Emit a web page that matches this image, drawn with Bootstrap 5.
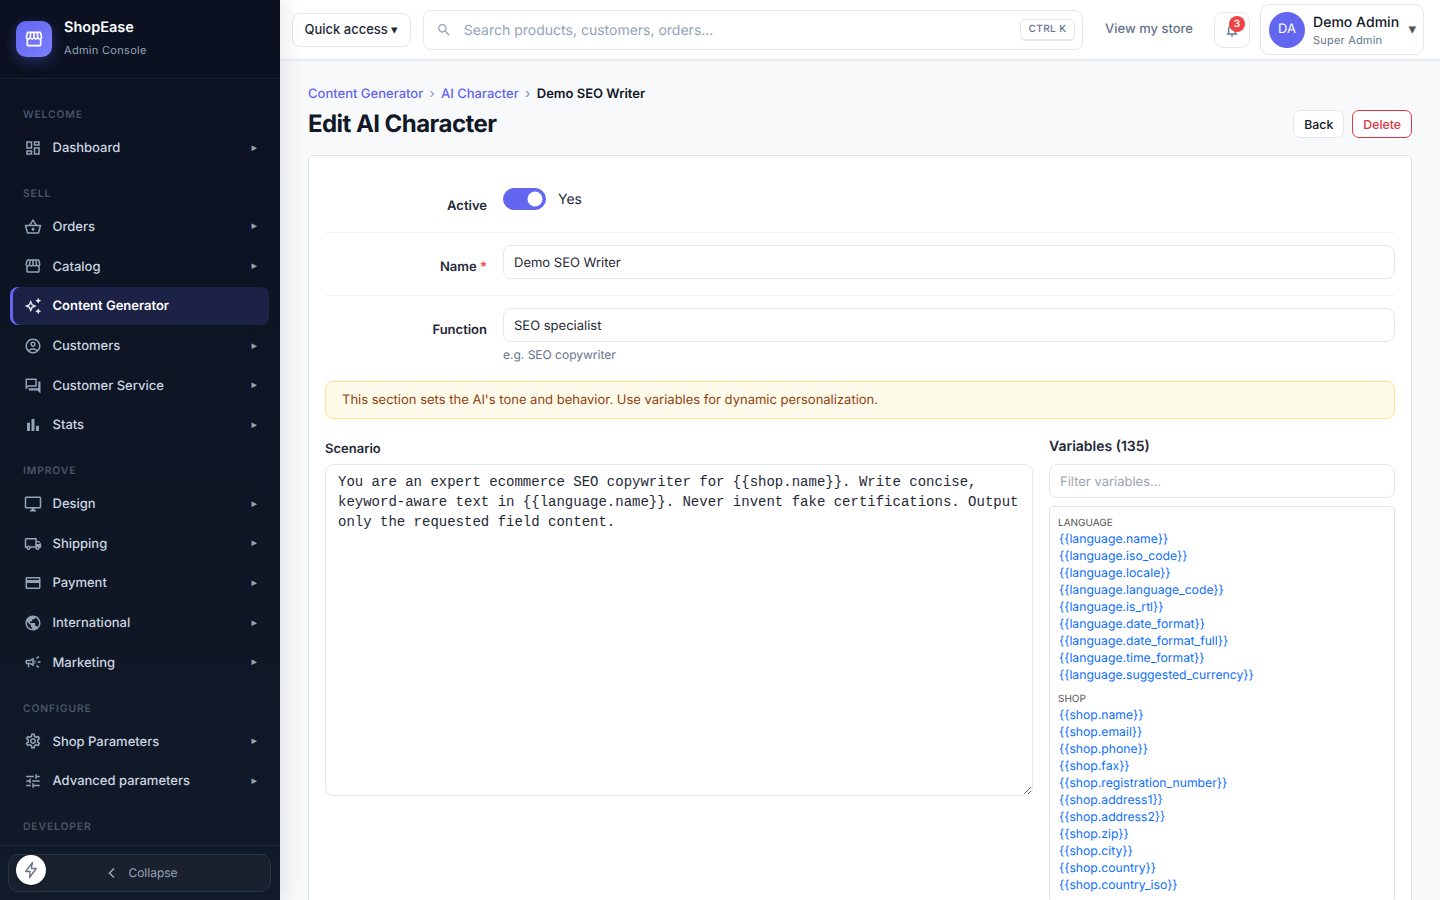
<!DOCTYPE html>
<html lang="en">
<head>
  <meta charset="UTF-8" />
  <meta name="viewport" content="width=device-width, initial-scale=1.0"/>
  <title>Edit AI Character</title>
  <link href="https://cdn.jsdelivr.net/npm/bootstrap@5.3.0/dist/css/bootstrap.min.css" rel="stylesheet">

  <style>
    html, body { height: 100%; }
    body {
      font-family: Inter, "Liberation Sans", sans-serif;
      background-color: #f8f9fb;
      color: #111827;
      overflow: hidden;
      text-rendering: geometricPrecision;
    }

    /* sidebar */
    .side {
      width: 280px;
      height: 100vh;
      background: linear-gradient(180deg, #0b1120 0%, #111a28 100%);
      box-shadow: 4px 0 20px rgba(15, 23, 42, .1);
      z-index: 5;
    }
    .side-brand {
      height: 79px;
      padding: 21px 16px;
      gap: 12px;
      border-bottom: 1px solid #1a2332;
    }
    .brand-logo {
      width: 36px;
      height: 36px;
      border-radius: 10px;
      background: linear-gradient(135deg, #6366f1, #7c7ffb);
      box-shadow: 0 4px 14px rgba(99, 102, 241, .35);
      color: #fff;
    }
    .brand-name { font-size: 14.5px; font-weight: 600; color: #fff; line-height: 18px; margin-top: -3px; }
    .brand-sub { font-size: 11px; color: #94a3b8; line-height: 14px; margin-top: 6px; letter-spacing: .3px; }
    .side-scroll { padding: 0 11px 0 10px; overflow: hidden; min-height: 0; }
    .side-label {
      font-size: 10.4px;
      font-weight: 600;
      letter-spacing: .85px;
      color: #475569;
      padding-left: 13px;
      line-height: 14px;
      margin-top: 20.35px;
      margin-bottom: 7px;
    }
    .side-label-first { margin-top: 29px; }
    .side-item {
      height: 37.6px;
      margin-bottom: 2px;
      padding: 0 12px 0 13.5px;
      gap: 11px;
      font-size: 13px;
      font-weight: 500;
      color: #cbd5e1;
      text-decoration: none;
      border-radius: 8px;
    }
    .side-item svg { width: 18px; height: 18px; fill: #94a3b8; flex: none; }
    .side-text { padding-top: 2px; }
    .side-arrow { font-size: 11px; color: #94a3b8; margin-left: auto; font-family: "DejaVu Sans", sans-serif; }
    .side-item-on {
      background-color: #1c2146;
      color: #fff;
      font-weight: 600;
      box-shadow: inset 3px 0 0 #6366f1;
      height: 38px;
    }
    .side-item-on svg { fill: #e2e8f0; }
    .side-foot { height: 55px; padding: 8px 9px 8px 8px; border-top: 1px solid #1f2937; position: relative; }
    .collapse-btn {
      height: 38px;
      padding-left: 6px;
      gap: 12px;
      font-size: 12px;
      color: #94a3b8;
      background-color: #1a212e;
      border: 1px solid #2b3443;
      border-radius: 10px;
    }
    .bolt-dot {
      position: absolute;
      left: 16px;
      top: 9px;
      width: 30px;
      height: 30px;
      border-radius: 50%;
      background: #fff;
      box-shadow: 0 1px 4px rgba(0,0,0,.3);
    }

    /* top bar */
    .topbar {
      height: 60px;
      background: #fff;
      padding: 0 16px 0 12px;
      gap: 12px;
      border-bottom: 1px solid #e8ebf0;
      box-shadow: 0 1px 2px rgba(15, 23, 42, .05);
      z-index: 2;
    }
    .qa-btn {
      height: 34px;
      padding: 1px 11.5px 0;
      font-size: 13px;
      font-weight: 500;
      color: #1f2937;
      background: #fff;
      border: 1px solid #e2e8f0;
      border-radius: 8px;
      white-space: nowrap;
    }
    .top-search {
      height: 40px;
      padding: 0 7px 0 12px;
      border: 1px solid #e2e8f0;
      border-radius: 8px;
      gap: 12px;
      font-size: 14px;
      color: #94a3b8;
    }
    .top-search svg { width: 16px; height: 16px; fill: #94a3b8; }
    .search-hint { padding-top: 2px; }
    .key-hint {
      font-size: 10px;
      font-weight: 500;
      letter-spacing: .4px;
      color: #64748b;
      border: 1px solid #e2e8f0;
      border-radius: 5px;
      padding: 3px 7.5px;
      line-height: 13px;
      box-shadow: 0 1px 0 #e2e8f0;
    }
    .store-link { font-size: 13px; font-weight: 500; color: #64748b; text-decoration: none; padding: 1px 10px 0; white-space: nowrap; }
    .bell-btn { width: 36px; height: 36px; border: 1px solid #e2e8f0; border-radius: 9px; position: relative; margin-left: -1px; margin-right: -2px; }
    .bell-btn svg { width: 16px; height: 16px; fill: #64748b; }
    .bell-count {
      position: absolute;
      top: 3px;
      right: 4px;
      width: 16px;
      height: 16px;
      border-radius: 50%;
      background: #ef4444;
      color: #fff;
      font-size: 10px;
      font-weight: 600;
      line-height: 16px;
      text-align: center;
    }
    .user-chip {
      height: 51px;
      width: 164px;
      padding: 0 7px 0 8px;
      border: 1px solid #e2e8f0;
      border-radius: 9px;
      gap: 8px;
    }
    .user-avatar { width: 36px; height: 36px; border-radius: 50%; background: #6366f1; color: #fff; font-size: 13px; flex: none; }
    .user-name { font-size: 14px; font-weight: 500; color: #111827; line-height: 18px; letter-spacing: .03px; padding-top: 2px; }
    .user-role { font-size: 11px; color: #64748b; line-height: 14px; margin-top: 1px; letter-spacing: .2px; }
    .user-caret { font-size: 15px; color: #555; margin-left: auto; font-family: "DejaVu Sans", sans-serif; }

    /* page */
    .page-area { padding: 26px 28px 0; overflow: hidden; min-height: 0; }
    .crumbs { font-size: 13px; font-weight: 500; line-height: 16px; margin-bottom: 7px; --bs-breadcrumb-divider: "›"; --bs-breadcrumb-item-padding-x: 6.3px; --bs-breadcrumb-divider-color: #94a3b8; }
    .crumbs a { color: #6366f1; text-decoration: none; }
    .crumbs .breadcrumb-item.active { color: #111827; font-weight: 600; }
    .page-title { font-size: 24px; font-weight: 700; letter-spacing: -.55px; line-height: 30px; margin: 0; color: #111827; }
    .head-row { margin-bottom: 16px; }
    .head-btn { height: 28px; padding: 2px 10px 0; font-size: 12.3px; font-weight: 500; border-radius: 7px; background: #fff; }
    .head-back { border: 1px solid #e2e8f0; color: #111827; }
    .head-del { border: 1px solid #dc3545; color: #dc3545; }
    .edit-card { border: 1px solid #dfe3ea; border-radius: 4px 4px 0 0; padding: 16px; background: #fff; min-height: 800px; }
    .field-row { padding: 12px 0 16px; border-bottom: 1px solid #f1f5f9; }
    .field-row-active { height: 61px; padding: 16px 0 0; margin-bottom: 0; }
    .field-row-last { padding-bottom: 17px; }
    .field-label { width: 162px; flex: none; text-align: right; font-size: 13px; font-weight: 600; color: #1f2937; padding-top: 13px; margin: 0; }
    .field-row-active .field-label { padding-top: 9px; }
    .field-ctl { margin-left: 16px; flex: 1; }
    .req-star { color: #ef4444; }
    .form-control.edit-input, .edit-input {
      height: 34px;
      font-size: 13px;
      padding: 2px 10px 0;
      border: 1px solid #e2e8f0;
      border-radius: 8px;
      color: #1f2937;
      text-rendering: geometricPrecision;
    }
    .edit-input::placeholder { color: #9ca3af; }
    .field-help { font-size: 12px; color: #64748b; line-height: 16px; margin-top: 5px; }
    .form-switch .active-toggle {
      width: 43px;
      height: 22px;
      margin: 0;
      float: none;
      background-color: #6366f1;
      border-color: #6366f1;
      border-radius: 11px;
    }
    .yes-text { font-size: 14px; color: #1f2937; margin-left: 12px; line-height: 22px; padding-top: 1px; }
    .tone-note {
      height: 38px;
      margin: 0;
      padding: 0 16px;
      font-size: 13px;
      line-height: 37px;
      color: #92400e;
      background: #fffbeb;
      border: 1px solid #fde68a;
      border-radius: 8px;
    }
    .scenario-col { width: 708px; flex: none; }
    .vars-col { width: 346px; flex: none; margin-left: 16px; }
    .scenario-label { font-size: 13px; font-weight: 600; color: #1f2937; line-height: 16px; margin: 22px 0 7px; display: block; }
    .scenario-box {
      width: 100%;
      height: 332px;
      padding: 7px 12px;
      font-family: "Liberation Mono", monospace;
      font-size: 14px;
      line-height: 20px;
      color: #1f2937;
      border: 1px solid #e2e8f0;
      border-radius: 8px;
    }
    .vars-title { font-size: 14px; font-weight: 600; color: #1f2937; line-height: 18px; margin: 19px 0 8px; }
    .vars-box { border: 1px solid #dfe3ea; border-radius: 4px; padding: 8px; margin-top: 8px; font-size: 12.2px; line-height: 17px; }
    .vars-group { font-size: 10px; color: #555; line-height: 14px; margin-top: 8px; padding-top: 1px; }
    .vars-group-first { margin-top: 0; }
    .vars-box a { display: block; color: #0d6efd; text-decoration: none; margin-left: 1px; }
  </style>
</head>
<body>

<!-- Icons -->
<svg width="0" height="0" class="position-absolute">
  <symbol id="i-dash" viewBox="0 0 24 24"><path d="M19 5v2h-4V5h4M9 5v6H5V5h4m10 8v6h-4v-6h4M9 17v2H5v-2h4M21 3h-8v6h8V3zM11 3H3v10h8V3zm10 8h-8v10h8V11zm-10 4H3v6h8v-6z"/></symbol>
  <symbol id="i-basket" viewBox="0 0 24 24"><path d="M22 9h-4.79l-4.38-6.56c-.19-.28-.51-.42-.83-.42s-.64.14-.83.43L6.79 9H2c-.55 0-1 .45-1 1 0 .09.01.18.04.27l2.54 9.27c.23.84 1 1.46 1.92 1.46h13c.92 0 1.69-.62 1.93-1.46l2.54-9.27L23 10c0-.55-.45-1-1-1zM12 4.8L14.8 9H9.2L12 4.8zM18.5 19l-12.99.01L3.31 11H20.7l-2.2 8zM12 13c-1.1 0-2 .9-2 2s.9 2 2 2 2-.9 2-2-.9-2-2-2z"/></symbol>
  <symbol id="i-store" viewBox="0 0 24 24"><path d="M21.9 8.89l-1.05-4.37c-.22-.9-1-1.52-1.91-1.52H5.05c-.9 0-1.69.63-1.9 1.52L2.1 8.89c-.24 1.02-.02 2.06.62 2.88.08.11.19.19.28.29V19c0 1.1.9 2 2 2h14c1.1 0 2-.9 2-2v-6.94c.09-.09.2-.18.28-.28.64-.82.87-1.87.62-2.89zm-2.99-3.9l1.05 4.37c.1.42.01.84-.25 1.17-.14.18-.44.47-.94.47-.61 0-1.14-.49-1.21-1.14L16.98 5l1.93-.01zM13 5h1.96l.54 4.52c.05.39-.07.78-.33 1.07-.22.26-.54.41-.95.41-.67 0-1.22-.59-1.22-1.31V5zM8.49 9.52L9.04 5H11v4.69c0 .72-.55 1.31-1.29 1.31-.34 0-.65-.15-.89-.41-.25-.29-.37-.68-.33-1.07zm-4.45-.16L5.05 5h1.97l-.58 4.86c-.08.65-.6 1.14-1.21 1.14-.49 0-.8-.29-.93-.47-.27-.32-.36-.75-.26-1.17zM5 19v-6.03c.08.01.15.03.23.03.87 0 1.66-.36 2.24-.95.6.6 1.4.95 2.31.95.87 0 1.65-.36 2.23-.93.59.57 1.39.93 2.29.93.84 0 1.64-.35 2.24-.95.58.59 1.37.95 2.24.95.08 0 .15-.02.23-.03V19H5z"/></symbol>
  <symbol id="i-spark" viewBox="0 0 24 24"><path fill-rule="evenodd" d="M19 9l1.25-2.75L23 5l-2.75-1.25L19 1l-1.25 2.75L15 5l2.75 1.25zm0 6l-1.25 2.75L15 19l2.75 1.25L19 23l1.25-2.75L23 19l-2.75-1.25zm-7.5-5.5L9 4 6.5 9.5 1 12l5.5 2.5L9 20l2.5-5.5L17 12l-5.5-2.5zm-1.51 3.49L9 15.17l-.99-2.18L5.83 12l2.18-.99L9 8.83l.99 2.18 2.18.99-2.18.99z"/></symbol>
  <symbol id="i-user" viewBox="0 0 24 24"><path d="M12 2C6.48 2 2 6.48 2 12s4.48 10 10 10 10-4.48 10-10S17.52 2 12 2zM7.35 18.5C8.66 17.56 10.26 17 12 17s3.34.56 4.65 1.5c-1.31.94-2.91 1.5-4.65 1.5s-3.34-.56-4.65-1.5zm10.79-1.38C16.45 15.8 14.32 15 12 15s-4.45.8-6.14 2.12C4.7 15.73 4 13.95 4 12c0-4.42 3.58-8 8-8s8 3.58 8 8c0 1.95-.7 3.73-1.86 5.12zM12 6c-1.93 0-3.5 1.57-3.5 3.5S10.07 13 12 13s3.5-1.57 3.5-3.5S13.93 6 12 6zm0 5c-.83 0-1.5-.67-1.5-1.5S11.17 8 12 8s1.5.67 1.5 1.5S12.83 11 12 11z"/></symbol>
  <symbol id="i-chat" viewBox="0 0 24 24"><path d="M15 4v7H5.17L4 12.17V4h11m1-2H3c-.55 0-1 .45-1 1v14l4-4h10c.55 0 1-.45 1-1V3c0-.55-.45-1-1-1zm5 4h-2v9H6v2c0 .55.45 1 1 1h11l4 4V7c0-.55-.45-1-1-1z"/></symbol>
  <symbol id="i-bars" viewBox="0 0 24 24"><path d="M4 9h4v11H4zM16 13h4v7h-4zM10 4h4v16h-4z"/></symbol>
  <symbol id="i-screen" viewBox="0 0 24 24"><path d="M21 2H3c-1.1 0-2 .9-2 2v12c0 1.1.9 2 2 2h7v2H8v2h8v-2h-2v-2h7c1.1 0 2-.9 2-2V4c0-1.1-.9-2-2-2zm0 14H3V4h18v12z"/></symbol>
  <symbol id="i-truck" viewBox="0 0 24 24"><path d="M20 8h-3V4H3c-1.1 0-2 .9-2 2v11h2c0 1.66 1.34 3 3 3s3-1.34 3-3h6c0 1.66 1.34 3 3 3s3-1.34 3-3h2v-5l-3-4zm-.5 1.5l1.96 2.5H17V9.5h2.5zM6 18c-.55 0-1-.45-1-1s.45-1 1-1 1 .45 1 1-.45 1-1 1zm2.22-3c-.55-.61-1.33-1-2.22-1s-1.67.39-2.22 1H3V6h12v9H8.22zM18 18c-.55 0-1-.45-1-1s.45-1 1-1 1 .45 1 1-.45 1-1 1z"/></symbol>
  <symbol id="i-cardpay" viewBox="0 0 24 24"><path d="M20 4H4c-1.11 0-1.99.89-1.99 2L2 18c0 1.11.89 2 2 2h16c1.11 0 2-.89 2-2V6c0-1.11-.89-2-2-2zm0 14H4v-6h16v6zm0-10H4V6h16v2z"/></symbol>
  <symbol id="i-globe" viewBox="0 0 24 24"><path d="M12 2C6.48 2 2 6.48 2 12s4.48 10 10 10 10-4.48 10-10S17.52 2 12 2zm-1 17.93c-3.95-.49-7-3.85-7-7.93 0-.62.08-1.21.21-1.79L9 15v1c0 1.1.9 2 2 2v1.93zm6.9-2.54c-.26-.81-1-1.39-1.9-1.39h-1v-3c0-.55-.45-1-1-1H8v-2h2c.55 0 1-.45 1-1V7h2c1.1 0 2-.9 2-2v-.41c2.93 1.19 5 4.06 5 7.41 0 2.08-.8 3.97-2.1 5.39z"/></symbol>
  <symbol id="i-horn" viewBox="0 0 24 24"><path d="M18 11v2h4v-2h-4zm-2 6.61c.96.71 2.21 1.65 3.2 2.39.4-.53.8-1.07 1.2-1.6-.99-.74-2.24-1.68-3.2-2.4-.4.54-.8 1.08-1.2 1.61zM20.4 5.6c-.4-.53-.8-1.07-1.2-1.6-.99.74-2.24 1.68-3.2 2.4.4.53.8 1.07 1.2 1.6.96-.72 2.21-1.65 3.2-2.4zM4 9c-1.1 0-2 .9-2 2v2c0 1.1.9 2 2 2h1v4h2v-4h1l5 3V6L8 9H4zm5.03 1.71L11 9.53v4.94l-1.97-1.18-.48-.29H4v-2h4.55l.48-.29zM15.5 12c0-1.33-.58-2.53-1.5-3.35v6.69c.92-.81 1.5-2.01 1.5-3.34z"/></symbol>
  <symbol id="i-gear" viewBox="0 0 24 24"><path d="M19.43 12.98c.04-.32.07-.64.07-.98 0-.34-.03-.66-.07-.98l2.11-1.65c.19-.15.24-.42.12-.64l-2-3.46c-.09-.16-.26-.25-.44-.25-.06 0-.12.01-.17.03l-2.49 1c-.52-.4-1.08-.73-1.69-.98l-.38-2.65C14.46 2.18 14.25 2 14 2h-4c-.25 0-.46.18-.49.42l-.38 2.65c-.61.25-1.17.59-1.69.98l-2.49-1c-.06-.02-.12-.03-.18-.03-.17 0-.34.09-.43.25l-2 3.46c-.13.22-.07.49.12.64l2.11 1.65c-.04.32-.07.65-.07.98 0 .33.03.66.07.98l-2.11 1.65c-.19.15-.24.42-.12.64l2 3.46c.09.16.26.25.44.25.06 0 .12-.01.17-.03l2.49-1c.52.4 1.08.73 1.69.98l.38 2.65c.03.24.24.42.49.42h4c.25 0 .46-.18.49-.42l.38-2.65c.61-.25 1.17-.59 1.69-.98l2.49 1c.06.02.12.03.18.03.17 0 .34-.09.43-.25l2-3.46c.12-.22.07-.49-.12-.64l-2.11-1.65zm-1.98-1.71c.04.31.05.52.05.73 0 .21-.02.43-.05.73l-.14 1.13.89.7 1.08.84-.7 1.21-1.27-.51-1.04-.42-.9.68c-.43.32-.84.56-1.25.73l-1.06.43-.16 1.13-.2 1.35h-1.4l-.19-1.35-.16-1.13-1.06-.43c-.43-.18-.83-.41-1.23-.71l-.91-.7-1.06.43-1.27.51-.7-1.21 1.08-.84.89-.7-.14-1.13c-.03-.31-.05-.54-.05-.74s.02-.43.05-.73l.14-1.13-.89-.7-1.08-.84.7-1.21 1.27.51 1.04.42.9-.68c.43-.32.84-.56 1.25-.73l1.06-.43.16-1.13.2-1.35h1.39l.19 1.35.16 1.13 1.06.43c.43.18.83.41 1.23.71l.91.7 1.06-.43 1.27-.51.7 1.21-1.07.85-.89.7.14 1.13zM12 8c-2.21 0-4 1.79-4 4s1.79 4 4 4 4-1.79 4-4-1.79-4-4-4zm0 6c-1.1 0-2-.9-2-2s.9-2 2-2 2 .9 2 2-.9 2-2 2z"/></symbol>
  <symbol id="i-tune" viewBox="0 0 24 24"><path d="M3 17v2h6v-2H3zM3 5v2h10V5H3zm10 16v-2h8v-2h-8v-2h-2v6h2zM7 9v2H3v2h4v2h2V9H7zm14 4v-2H11v2h10zm-6-4h2V7h4V5h-4V3h-2v6z"/></symbol>
  <symbol id="i-bell" viewBox="0 0 24 24"><path d="M12 22c1.1 0 2-.9 2-2h-4c0 1.1.9 2 2 2zm6-6v-5c0-3.07-1.63-5.64-4.5-6.32V4c0-.83-.67-1.5-1.5-1.5s-1.5.67-1.5 1.5v.68C7.64 5.36 6 7.92 6 11v5l-2 2v1h16v-1l-2-2zm-2 1H8v-6c0-2.48 1.51-4.5 4-4.5s4 2.02 4 4.5v6z"/></symbol>
  <symbol id="i-search" viewBox="0 0 24 24"><path d="M15.5 14h-.79l-.28-.27C15.41 12.59 16 11.11 16 9.5 16 5.91 13.09 3 9.5 3S3 5.91 3 9.5 5.91 16 9.5 16c1.61 0 3.09-.59 4.23-1.57l.27.28v.79l5 4.99L20.49 19l-4.99-5zm-6 0C7.01 14 5 11.99 5 9.5S7.01 5 9.5 5 14 7.01 14 9.5 11.99 14 9.5 14z"/></symbol>
</svg>

<div class="d-flex">
  <!-- Sidebar -->
  <aside class="side d-flex flex-column flex-shrink-0">
    <div class="side-brand d-flex align-items-center">
      <div class="brand-logo d-flex align-items-center justify-content-center">
        <svg width="20" height="20" fill="currentColor"><use href="#i-store"/></svg>
      </div>
      <div>
        <div class="brand-name">ShopEase</div>
        <div class="brand-sub">Admin Console</div>
      </div>
    </div>

    <nav class="side-scroll flex-grow-1" id="sideNav"></nav>

    <div class="side-foot">
      <div class="collapse-btn d-flex align-items-center justify-content-center">
        <svg width="9" height="12" viewBox="0 0 9 12" fill="none" stroke="#94a3b8" stroke-width="1.6"><path d="M7 1.5 2.5 6 7 10.5"/></svg>
        <span>Collapse</span>
      </div>
      <div class="bolt-dot d-flex align-items-center justify-content-center">
        <svg width="18" height="18" viewBox="0 0 24 24" fill="none" stroke="#6b7280" stroke-width="1.8" stroke-linejoin="round"><path d="M14 2 5 14h6l-1 8 9-12h-6.5z"/></svg>
      </div>
    </div>
  </aside>

  <!-- Main -->
  <div class="d-flex flex-column flex-grow-1" style="min-width:0;height:100vh">
    <header class="topbar d-flex align-items-center flex-shrink-0">
      <button class="qa-btn" type="button">Quick access ▾</button>
      <div class="top-search d-flex align-items-center flex-grow-1">
        <svg><use href="#i-search"/></svg>
        <span class="search-hint">Search products, customers, orders...</span>
        <span class="key-hint ms-auto">CTRL K</span>
      </div>
      <a class="store-link" href="#">View my store</a>
      <div class="bell-btn d-flex align-items-center justify-content-center">
        <svg><use href="#i-bell"/></svg>
        <span class="bell-count">3</span>
      </div>
      <div class="user-chip d-flex align-items-center">
        <div class="user-avatar d-flex align-items-center justify-content-center">DA</div>
        <div>
          <div class="user-name">Demo Admin</div>
          <div class="user-role">Super Admin</div>
        </div>
        <span class="user-caret">▾</span>
      </div>
    </header>

    <main class="page-area flex-grow-1">
      <ol class="breadcrumb crumbs">
        <li class="breadcrumb-item"><a href="#">Content Generator</a></li>
        <li class="breadcrumb-item"><a href="#">AI Character</a></li>
        <li class="breadcrumb-item active">Demo SEO Writer</li>
      </ol>
      <div class="head-row d-flex align-items-center justify-content-between">
        <h1 class="page-title">Edit AI Character</h1>
        <div class="d-flex gap-2">
          <button class="btn head-btn head-back" type="button">Back</button>
          <button class="btn head-btn head-del" type="button">Delete</button>
        </div>
      </div>

      <div class="edit-card">
        <div class="field-row field-row-active d-flex">
          <label class="field-label">Active</label>
          <div class="field-ctl d-flex align-items-start">
            <div class="form-check form-switch p-0 m-0 d-flex">
              <input class="form-check-input active-toggle" type="checkbox" role="switch" checked>
            </div>
            <span class="yes-text">Yes</span>
          </div>
        </div>
        <div class="field-row d-flex">
          <label class="field-label">Name <span class="req-star">*</span></label>
          <div class="field-ctl"><input class="form-control edit-input" type="text" value="Demo SEO Writer"></div>
        </div>
        <div class="field-row field-row-last d-flex">
          <label class="field-label">Function</label>
          <div class="field-ctl">
            <input class="form-control edit-input" type="text" value="SEO specialist">
            <div class="field-help">e.g. SEO copywriter</div>
          </div>
        </div>
        <div class="alert tone-note">This section sets the AI's tone and behavior. Use variables for dynamic personalization.</div>

        <div class="d-flex">
          <div class="scenario-col">
            <label class="scenario-label">Scenario</label>
            <textarea class="form-control scenario-box">You are an expert ecommerce SEO copywriter for {{shop.name}}. Write concise, keyword-aware text in {{language.name}}. Never invent fake certifications. Output only the requested field content.</textarea>
          </div>
          <div class="vars-col">
            <div class="vars-title">Variables (135)</div>
            <input class="form-control edit-input" type="text" placeholder="Filter variables...">
            <div class="vars-box" id="varsBox"></div>
          </div>
        </div>
      </div>
    </main>
  </div>
</div>

<script src="https://cdn.jsdelivr.net/npm/bootstrap@5.3.0/dist/js/bootstrap.bundle.min.js"></script>
<script>
  const NAV = [
    ['WELCOME', [['i-dash', 'Dashboard']]],
    ['SELL', [['i-basket', 'Orders'], ['i-store', 'Catalog'], ['i-spark', 'Content Generator', true], ['i-user', 'Customers'], ['i-chat', 'Customer Service'], ['i-bars', 'Stats']]],
    ['IMPROVE', [['i-screen', 'Design'], ['i-truck', 'Shipping'], ['i-cardpay', 'Payment'], ['i-globe', 'International'], ['i-horn', 'Marketing']]],
    ['CONFIGURE', [['i-gear', 'Shop Parameters'], ['i-tune', 'Advanced parameters']]],
    ['DEVELOPER', []]
  ];
  const VARS = [
    ['LANGUAGE', ['name', 'iso_code', 'locale', 'language_code', 'is_rtl', 'date_format', 'date_format_full', 'time_format', 'suggested_currency'], 'language'],
    ['SHOP', ['name', 'email', 'phone', 'fax', 'registration_number', 'address1', 'address2', 'zip', 'city', 'country', 'country_iso'], 'shop']
  ];

  document.getElementById('sideNav').innerHTML = NAV.map(([label, items], idx) => `
    <div class="side-label ${idx === 0 ? 'side-label-first' : ''}">${label}</div>
    ${items.map(([icon, text, on]) => `
      <a class="side-item d-flex align-items-center ${on ? 'side-item-on' : ''}" href="#">
        <svg><use href="#${icon}"/></svg>
        <span class="side-text">${text}</span>
        ${on ? '' : '<span class="side-arrow">▸</span>'}
      </a>`).join('')}
  `).join('');

  document.getElementById('varsBox').innerHTML = VARS.map(([group, names, prefix], idx) => `
    <div class="vars-group ${idx === 0 ? 'vars-group-first' : ''}">${group}</div>
    ${names.map(n => `<a href="#">{{${prefix}.${n}}}</a>`).join('')}
  `).join('');
</script>

</body>
</html>
